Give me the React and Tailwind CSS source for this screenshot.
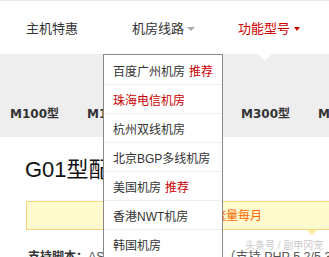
export default function App() {
  const rows = [
    { t: "百度广州机房", tag: "推荐" },
    { t: "珠海电信机房", red: true },
    { t: "杭州双线机房" },
    { t: "北京BGP多线机房" },
    { t: "美国机房", tag: "推荐" },
    { t: "香港NWT机房" },
    { t: "韩国机房" },
  ];
  const models = ["M100型", "M150型", "M200型", "M300型", "M500型"];
  return (
    <div className="relative w-[329px] h-[257px] overflow-hidden bg-white font-['Liberation_Sans','Noto_Sans_CJK_SC',sans-serif]">
      <div className="h-px bg-[#e8e8e8]" />
      <nav className="flex h-[53px] items-center pl-[26px] pt-[3px] text-[13px] text-[#333]">
        <div className="w-[106px]">主机特惠</div>
        <div className="w-[106px] flex items-center">
          机房线路
          <span className="ml-[3px] w-0 h-0 border-x-4 border-t-4 border-x-transparent border-t-[#aaa]" />
        </div>
        <div className="flex items-center text-[#c00]">
          功能型号
          <span className="ml-[4px] w-0 h-0 border-x-[3px] border-t-4 border-x-transparent border-t-[#c00]" />
        </div>
      </nav>
      <div className="relative h-[83px] bg-[#eeeeee] flex items-center pt-[37px] pl-[10px] text-[12px] font-bold text-[#333] font-['DejaVu_Sans','Noto_Sans_CJK_SC',sans-serif]">
        <span className="absolute left-[258px] top-0 w-0 h-0 border-x-[7px] border-t-[7px] border-x-transparent border-t-white" />
        {models.map((m) => (
          <div key={m} className="w-[77px] shrink-0">{m}</div>
        ))}
      </div>
      <div className="pl-[25px]">
        <h1 className="mt-[20px] text-[22px] leading-[26px] text-[#111]">G01型配置</h1>
        <div className="mt-[18px] ml-px w-[320px] h-[29px] border border-[#f8d67c] bg-[#fffbcf] flex items-center pl-[139px] text-[12px] text-[#ff6600]">
          赠送不限流量每月
        </div>
        <div className="mt-[17px] ml-[3px] text-[12.5px] leading-[20px] whitespace-nowrap text-[#555]">
          <span className="font-bold text-[12px] text-[#333]">支持脚本：</span>ASP/ASP.NET/PHP/Perl（支持 PHP 5.2/5.3/5.4）
        </div>
      </div>
      <span className="absolute left-[307px] top-[230px] w-0 h-0 border-x-[5px] border-t-[5px] border-x-transparent border-t-[#fde9a6]" />
      <div className="absolute left-[103px] top-[54px] w-[120px] h-[220px] border border-[#888] bg-white pt-px text-[12px] text-[#333]">
        {rows.map((r) => (
          <div key={r.t} className={`h-[29px] border-b border-[#eee] pl-[9px] pt-[3px] flex items-center whitespace-nowrap ${r.red ? "text-[#c00]" : ""}`}>
            {r.t}
            {r.tag && <span className="ml-[4px] text-[#c00]">{r.tag}</span>}
          </div>
        ))}
      </div>
      <div className="absolute left-[245px] top-[239px] text-[10px] leading-[14px] text-[#bbb] opacity-80 whitespace-nowrap">头条号 / 副甲冈宠</div>
    </div>
  );
}
